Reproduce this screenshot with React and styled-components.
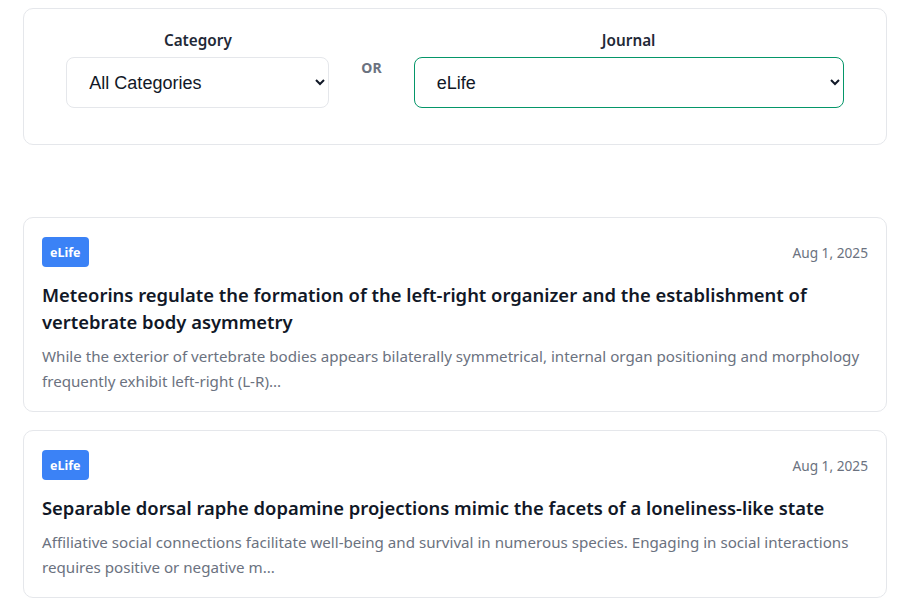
import React from "react";
import styled, { createGlobalStyle } from "styled-components";

const Global = createGlobalStyle`
  html, body { margin: 0; padding: 0; background: #ffffff; }
  body { font-family: "Noto Sans", "Open Sans", sans-serif; color: #111827; }
`;

const Page = styled.div`
  padding: 8px 17px 0 23px;
  display: flex;
  flex-direction: column;
`;

const FilterCard = styled.div`
  border: 1px solid #e5e7eb;
  border-radius: 10px;
  height: 137px;
  box-sizing: border-box;
  padding: 21px 0 0;
  display: flex;
  justify-content: center;
  align-items: flex-start;
  gap: 32px;
`;

const Group = styled.div`
  display: flex;
  flex-direction: column;
  align-items: center;
  gap: 7px;
  width: ${(p) => p.$w}px;
`;

const Label = styled.label`
  font-size: 15.3px;
  font-weight: 600;
  color: #1f2937;
  line-height: 20px;
`;

const Select = styled.select`
  width: 100%;
  height: 51px;
  box-sizing: border-box;
  border: 1px solid ${(p) => (p.$active ? "#059669" : "#e5e7eb")};
  border-radius: 8px;
  background: #fff;
  padding: 0 12px 0 18px;
  font-family: "Liberation Sans", Arial, sans-serif;
  font-size: 18px;
  color: #111827;
  outline: none;
`;

const Or = styled.div`
  font-size: 14px;
  font-weight: 700;
  color: #6b7280;
  line-height: 20px;
  margin-top: 28px;
`;

const List = styled.div`
  margin-top: 72px;
  display: flex;
  flex-direction: column;
  gap: 18px;
`;

const Card = styled.article`
  border: 1px solid #e5e7eb;
  border-radius: 10px;
  padding: 19px 18px 17px;
  background: #fff;
`;

const Top = styled.div`
  display: flex;
  justify-content: space-between;
  align-items: center;
`;

const Badge = styled.span`
  background: #3b82f6;
  color: #fff;
  font-size: 12.5px;
  font-weight: 700;
  height: 30px;
  padding: 0 8px;
  border-radius: 4px;
  display: inline-flex;
  align-items: center;
`;

const DateText = styled.span`
  font-size: 13.7px;
  color: #6b7280;
`;

const Title = styled.h3`
  margin: 14px 0 0;
  font-size: 18.4px;
  font-weight: 600;
  line-height: 27px;
  color: #111827;
`;

const Desc = styled.p`
  margin: 9px 0 0;
  font-size: 15.15px;
  line-height: 25px;
  color: #6b7280;
`;

const articles = [
  {
    journal: "eLife",
    date: "Aug 1, 2025",
    title:
      "Meteorins regulate the formation of the left-right organizer and the establishment of vertebrate body asymmetry",
    desc:
      "While the exterior of vertebrate bodies appears bilaterally symmetrical, internal organ positioning and morphology frequently exhibit left-right (L-R)...",
  },
  {
    journal: "eLife",
    date: "Aug 1, 2025",
    title:
      "Separable dorsal raphe dopamine projections mimic the facets of a loneliness-like state",
    desc:
      "Affiliative social connections facilitate well-being and survival in numerous species. Engaging in social interactions requires positive or negative m...",
  },
];

export default function App() {
  return (
    <>
      <Global />
      <Page>
        <FilterCard>
          <Group $w={263}>
            <Label>Category</Label>
            <Select defaultValue="all">
              <option value="all">All Categories</option>
            </Select>
          </Group>
          <Or>OR</Or>
          <Group $w={430}>
            <Label>Journal</Label>
            <Select $active defaultValue="elife">
              <option value="elife">eLife</option>
            </Select>
          </Group>
        </FilterCard>
        <List>
          {articles.map((a, i) => (
            <Card key={i}>
              <Top>
                <Badge>{a.journal}</Badge>
                <DateText>{a.date}</DateText>
              </Top>
              <Title>{a.title}</Title>
              <Desc>{a.desc}</Desc>
            </Card>
          ))}
        </List>
      </Page>
    </>
  );
}
